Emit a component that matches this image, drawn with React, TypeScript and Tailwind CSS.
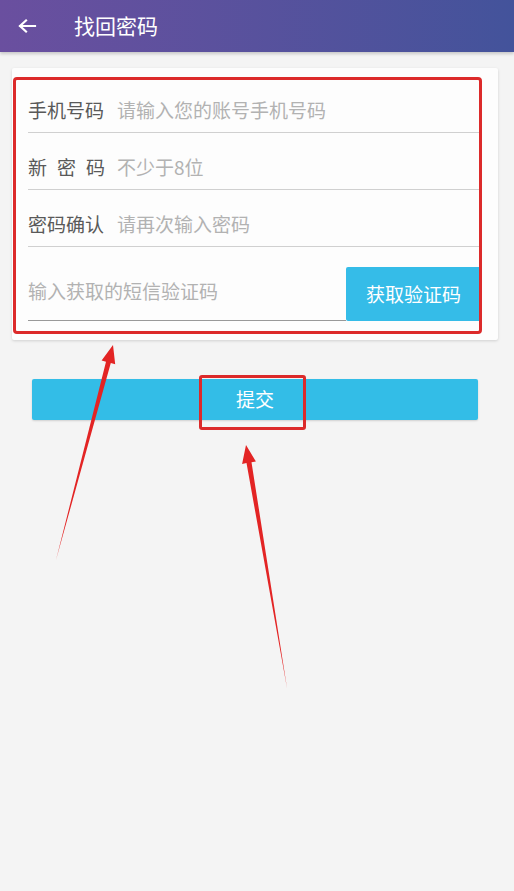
import React from "react";

const font = { fontFamily: '"Noto Sans CJK SC", "Noto Sans", sans-serif' };

function Row({ label, placeholder, spaced }: { label: string; placeholder: string; spaced?: boolean }) {
  return (
    <div className="flex h-[57px] items-center pt-[12px] border-b border-[#d0d0d0]">
      {spaced ? (
        <div className="flex w-[77px] justify-between text-[19px] text-[#595959]">
          <span>新</span>
          <span>密</span>
          <span>码</span>
        </div>
      ) : (
        <div className="w-[77px] text-[19px] text-[#595959] whitespace-nowrap">{label}</div>
      )}
      <div className="ml-[12px] text-[19px] text-[#b2b2b2] whitespace-nowrap">{placeholder}</div>
    </div>
  );
}

export default function App() {
  return (
    <div className="relative w-[514px] h-[891px] overflow-hidden bg-[#f4f4f4]" style={font}>
      <div className="flex h-[52px] items-center bg-gradient-to-r from-[#6a4f9f] to-[#43539b] shadow-[0_2px_3px_rgba(0,0,0,0.18)]">
        <svg className="ml-[17px]" width="20" height="16" viewBox="0 0 20 16" fill="none">
          <path d="M18 8H3M9 2.5L3 8L9 13.5" stroke="white" strokeWidth="2.2" strokeLinecap="square" />
        </svg>
        <div className="ml-[37px] text-[21px] text-white">找回密码</div>
      </div>

      <div className="mx-[12px] mt-[16px] w-[486px] rounded-[2px] bg-[#fdfdfd] pl-[16px] pr-[17px] pt-[8px] pb-[19px] shadow-[0_1px_3px_rgba(0,0,0,0.15)]">
        <Row label="手机号码" placeholder="请输入您的账号手机号码" />
        <Row label="新密码" placeholder="不少于8位" spaced />
        <Row label="密码确认" placeholder="请再次输入密码" />
        <div className="mt-[20px] flex h-[54px] items-stretch">
          <div className="flex flex-1 items-center border-b border-[#999999] pb-[4px] text-[19px] text-[#b2b2b2]">
            输入获取的短信验证码
          </div>
          <div className="flex w-[135px] items-center justify-center rounded-[2px] bg-[#35bce8] text-[19px] text-white">
            获取验证码
          </div>
        </div>
      </div>

      <div className="ml-[32px] mr-[36px] mt-[39px] flex h-[41px] items-center justify-center rounded-[2px] bg-[#33bde7] text-[19px] text-white shadow-[0_1px_2px_rgba(0,0,0,0.15)]">
        提交
      </div>

      {/* annotation overlays */}
      <div className="pointer-events-none absolute left-[13px] top-[77px] h-[257px] w-[469px] rounded-[4px] border-[3px] border-[#dc2a2a]" />
      <div className="pointer-events-none absolute left-[199px] top-[375px] h-[55px] w-[107px] rounded-[3px] border-[3px] border-[#dc2a2a]" />
      <svg className="pointer-events-none absolute left-0 top-0" width="514" height="891" viewBox="0 0 514 891">
        <polygon
          points="56,560 106,361.8 101.6,360.6 113,345 115.2,364.2 110.8,363"
          fill="#e32424"
        />
        <polygon
          points="287,688 246.5,463.1 242.1,463.9 246,445 255.9,461.5 251.5,462.3"
          fill="#e32424"
        />
      </svg>
    </div>
  );
}
